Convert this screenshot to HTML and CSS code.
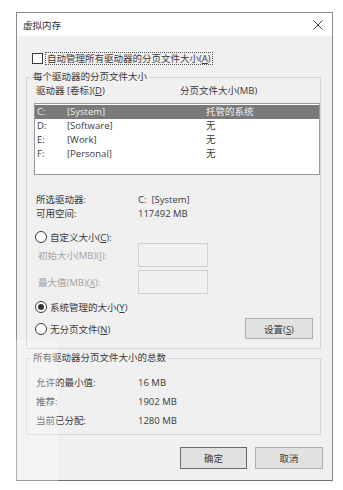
FILE: index.html
```html
<!DOCTYPE html>
<html lang="zh-CN">
<head>
<meta charset="utf-8">
<title>虚拟内存</title>
<link rel="stylesheet" href="styles.css">
</head>
<body>
<div class="dialog">
  <div class="titlebar">
    <span class="title">虚拟内存</span>
    <svg class="close" width="10" height="10" viewBox="0 0 10 10"><path d="M0.5 0.5 L9.5 9.5 M9.5 0.5 L0.5 9.5" stroke="#444" stroke-width="1" fill="none"/></svg>
  </div>
  <div class="body">
    <div class="check-row">
      <span class="checkbox"></span>
      <span class="focus">自动管理所有驱动器的分页文件大小(<u>A</u>)</span>
    </div>

    <fieldset class="group g1">
      <legend>每个驱动器的分页文件大小</legend>
      <div class="cols"><span class="c1">驱动器 [卷标](<u>D</u>)</span><span class="c2">分页文件大小(MB)</span></div>
      <div class="list">
        <div class="row sel"><span class="drv">C:</span><span class="lbl">[System]</span><span class="size">托管的系统</span></div>
        <div class="row"><span class="drv">D:</span><span class="lbl">[Software]</span><span class="size">无</span></div>
        <div class="row"><span class="drv">E:</span><span class="lbl">[Work]</span><span class="size">无</span></div>
        <div class="row"><span class="drv">F:</span><span class="lbl">[Personal]</span><span class="size">无</span></div>
      </div>
      <div class="info first"><span class="k">所选驱动器:</span><span class="v">C:&nbsp;&nbsp;[System]</span></div>
      <div class="info"><span class="k">可用空间:</span><span class="v">117492 MB</span></div>

      <div class="radio-row r-custom"><span class="radio"></span><span>自定义大小(<u>C</u>):</span></div>
      <div class="field-row"><span class="fk">初始大小(MB)(<u>I</u>):</span><span class="box"></span></div>
      <div class="field-row second"><span class="fk">最大值(MB)(<u>X</u>):</span><span class="box"></span></div>

      <div class="radio-row r-sys"><span class="radio on"></span><span>系统管理的大小(<u>Y</u>)</span></div>
      <div class="none-row">
        <div class="radio-row"><span class="radio"></span><span>无分页文件(<u>N</u>)</span></div>
        <button class="btn set">设置(<u>S</u>)</button>
      </div>
    </fieldset>

    <fieldset class="group g2">
      <legend>所有驱动器分页文件大小的总数</legend>
      <div class="info"><span class="k">允许的最小值:</span><span class="v">16 MB</span></div>
      <div class="info gap"><span class="k">推荐:</span><span class="v">1902 MB</span></div>
      <div class="info gap"><span class="k">当前已分配:</span><span class="v">1280 MB</span></div>
    </fieldset>

    <div class="actions">
      <button class="btn ok">确定</button>
      <button class="btn">取消</button>
    </div>
  </div>
</div>
<div class="glare"></div>
</body>
</html>
```

FILE: styles.css
```css
html, body {
  margin: 0;
  padding: 0;
  background: #ffffff;
}

body {
  font-family: "Open Sans", "Noto Sans CJK SC", sans-serif;
  font-size: 9.5px;
  color: #3a3a3a;
  position: relative;
  width: 343px;
  height: 490px;
  overflow: hidden;
}

.dialog {
  margin: 12px 0 0 16px;
  width: 317px;
  box-sizing: border-box;
  border: 1px solid #8c8c8c;
  border-bottom-color: #6f6f6f;
  background: #f0f0f0;
}

.titlebar {
  height: 23px;
  background: #ffffff;
  display: flex;
  align-items: center;
  justify-content: space-between;
  padding: 0 9px 0 6px;
}

.title {
  font-size: 9.5px;
  color: #333;
}

.close {
  display: block;
}

.body {
  padding: 16px 11px 11px 9px;
}

.check-row {
  display: flex;
  align-items: center;
  height: 13px;
  margin-left: 6px;
}

.checkbox {
  width: 9px;
  height: 9px;
  border: 1px solid #3a3a3a;
  background: #ffffff;
  margin-right: 2px;
}

.focus {
  border: 1px dotted #555;
  line-height: 11px;
  padding: 0 1px;
}

u {
  text-decoration: underline;
  text-underline-offset: 1px;
}

.group {
  margin: 0;
  padding: 0 0 0 7px;
  border: 1px solid #d4d4d4;
  min-width: 0;
}

.group legend {
  padding: 0 2px;
  margin-left: -3px;
  line-height: 14px;
}

.g1 {
  margin-top: 5px;
  padding-bottom: 9px;
}

.cols {
  display: flex;
  line-height: 14px;
  padding-left: 2px;
}

.c1 {
  width: 144px;
}

.list {
  margin-top: 5px;
  height: 72px;
  box-sizing: border-box;
  border: 1px solid #9a9a9a;
  background: #ffffff;
  padding-top: 1px;
}

.row {
  display: flex;
  height: 14px;
  line-height: 14px;
  padding-left: 2px;
}

.row.sel {
  background: #7a7a7a;
  color: #eeeeee;
}

.drv {
  width: 30px;
}

.lbl {
  width: 139px;
}

.info {
  display: flex;
  line-height: 14px;
  padding-left: 2px;
}

.info.first {
  margin-top: 18px;
}

.info.gap {
  margin-top: 5px;
}

.k {
  width: 102px;
}

.radio-row {
  display: flex;
  align-items: center;
  height: 14px;
  padding-left: 1px;
}

.r-custom {
  margin-top: 9px;
  height: 13px;
}

.r-sys {
  margin-top: 6px;
}

.radio {
  width: 10px;
  height: 10px;
  border: 1px solid #3a3a3a;
  border-radius: 50%;
  background: #ffffff;
  margin-right: 3px;
  box-sizing: content-box;
  display: flex;
  align-items: center;
  justify-content: center;
}

.radio.on::after {
  content: "";
  width: 6px;
  height: 6px;
  border-radius: 50%;
  background: #333;
}

.field-row {
  display: flex;
  align-items: center;
  height: 24px;
  padding-left: 4px;
  color: #a3a3a3;
}

.field-row.second {
  margin-top: 3px;
}

.fk {
  width: 100px;
}

.box {
  width: 70px;
  height: 24px;
  box-sizing: border-box;
  border: 1px solid #d0d0d0;
  background: #f0f0f0;
}

.none-row {
  margin-top: 4px;
  display: flex;
  align-items: center;
  justify-content: space-between;
  height: 21px;
  padding-right: 7px;
}

.btn {
  font-family: "Open Sans", "Noto Sans CJK SC", sans-serif;
  font-size: 9.5px;
  color: #3a3a3a;
  background: #e1e1e1;
  border: 1px solid #adadad;
  width: 68px;
  height: 22px;
  padding: 0;
  margin: 0;
}

.btn.set {
  height: 21px;
}

.btn.ok {
  border-color: #6a6a6a;
  width: 67px;
}

.g2 {
  margin-top: 2px;
  padding-top: 11px;
  padding-bottom: 6px;
}

.actions {
  margin-top: 12px;
  display: flex;
  justify-content: flex-end;
  gap: 8px;
  margin-right: -2px;
}

.glare {
  position: absolute;
  left: 0;
  top: 340px;
  width: 58px;
  height: 150px;
  background: rgba(255, 255, 255, 0.3);
}
```
